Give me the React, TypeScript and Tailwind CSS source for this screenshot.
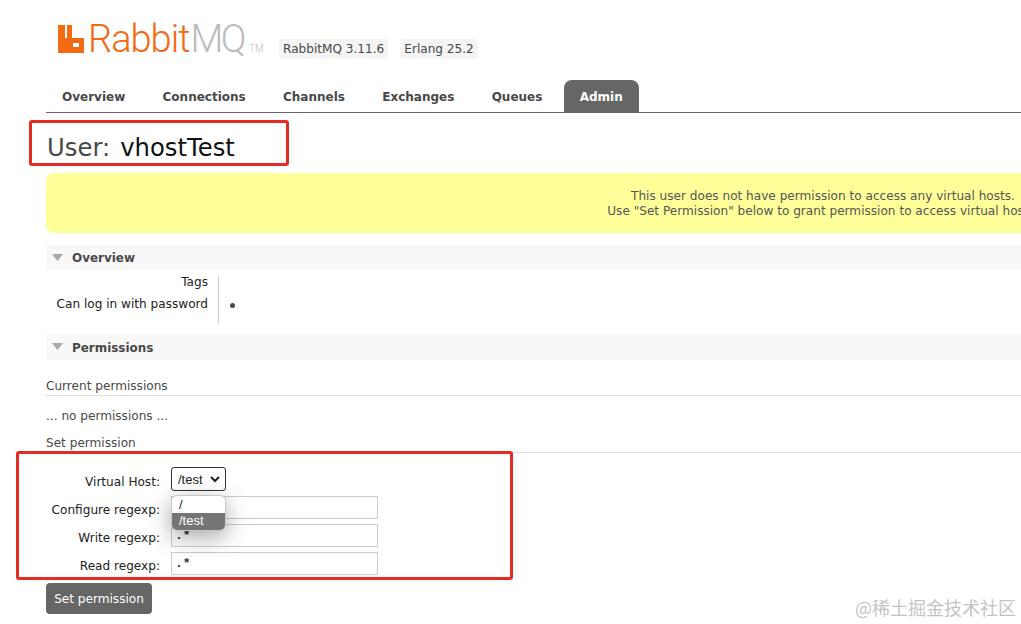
const SectionHeader = ({ title, className }: { title: string; className: string }) => (
  <div className={`relative flex items-center bg-[#f8f8f8] pl-[26px] pt-[3px] text-[11.95px] font-bold text-[#484848] ${className}`}>
    <svg className="absolute left-[6px] top-[9px]" width="11" height="7" viewBox="0 0 11 7">
      <path d="M0 0H11L5.5 7Z" fill="#a8a8a8" />
    </svg>
    {title}
  </div>
);

const Tab = ({ label, active }: { label: string; active?: boolean }) => (
  <div
    className={`flex h-[32px] items-center px-4 pt-[2px] text-[12px] font-bold ${
      active ? "rounded-t-[8px] bg-[#666666] text-white" : "text-[#484848]"
    }`}
  >
    {label}
  </div>
);

const FormRow = ({ label, value }: { label: string; value?: string }) => (
  <div className="flex h-[28px] items-start">
    <div className="w-[125px] whitespace-nowrap pr-[11px] text-right leading-[30px] text-[#222222]">{label}</div>
    <div className="mt-[1px] flex h-[23px] w-[207px] items-center border border-[#cccccc] bg-white pl-[3px] font-['Liberation_Mono',monospace] text-[13px] font-bold leading-none text-[#333333]">
      {value}
    </div>
  </div>
);

export default function App() {
  return (
    <div className="relative h-[624px] w-[1021px] overflow-hidden bg-white font-['DejaVu_Sans','Liberation_Sans',sans-serif] text-[12.1px] text-[#484848]">
      <div className="pl-[46px]">
        {/* Logo row */}
        <div className="flex h-[80px] items-start pl-[12px] pt-[18px]">
          <svg className="mt-[7px] shrink-0" width="26" height="28" viewBox="0 0 26 28">
            <path
              fill="#f26a13"
              fillRule="evenodd"
              d="M0 0H7V13H9V0H14V13H26V28H0ZM15 18V22H21V18Z"
            />
          </svg>
          <div className="ml-[4px] flex w-[175px] shrink-0 items-baseline font-['Roboto',sans-serif] text-[38px] font-light leading-[42px]">
            <span className="tracking-[-1px] text-[#f26a13]">Rabbit</span>
            <span className="ml-[1px] tracking-[-2.5px] text-[#bcbcbc]">MQ</span>
            <span className="ml-[5px] text-[10px] text-[#bcbcbc]">TM</span>
          </div>
          <div className="ml-[16px] mt-[21px] flex gap-[12px]">
            <span className="rounded-[3px] bg-[#f4f4f4] px-[4px] py-[1px]">RabbitMQ 3.11.6</span>
            <span className="rounded-[3px] bg-[#f4f4f4] px-[4px] py-[1px]">Erlang 25.2</span>
          </div>
        </div>
        {/* Tabs */}
        <div className="flex gap-[5.3px] border-b border-[#666666]">
          <Tab label="Overview" />
          <Tab label="Connections" />
          <Tab label="Channels" />
          <Tab label="Exchanges" />
          <Tab label="Queues" />
          <Tab label="Admin" active />
        </div>
        {/* Title */}
        <h1 className="ml-px mt-[20px] flex h-[30px] items-center text-[24.3px] leading-none text-[#484848]">
          User:<span className="ml-[10px] text-[#111111]">vhostTest</span>
        </h1>
        {/* Warning */}
        <div className="mt-[10px] flex h-[60px] w-[1554px] flex-col items-center justify-center rounded-l-[8px] bg-[#ffff99] pt-[2px] text-center leading-[15px] text-[#555555]">
          <div>This user does not have permission to access any virtual hosts.</div>
          <div>Use "Set Permission" below to grant permission to access virtual hosts.</div>
        </div>
        <SectionHeader title="Overview" className="mt-[12px] h-[25px]" />
        <div className="mt-[6px] flex h-[47px]">
          <div className="w-[173px] border-r border-[#cccccc] pr-[10px] text-right text-[#222222]">
            <div className="h-[22px] leading-[12px]">Tags</div>
            <div className="leading-[12px]">Can log in with password</div>
          </div>
          <div className="pl-[11px] pt-[27px]">
            <div className="h-[5px] w-[5px] rounded-full bg-[#484848]" />
          </div>
        </div>
        <SectionHeader title="Permissions" className="mt-[11px] h-[26px]" />
        <div className="mt-[19px] border-b border-[#dddddd] pb-[1px] leading-[15px]">Current permissions</div>
        <div className="mt-[13px] leading-[15px]">... no permissions ...</div>
        <div className="mt-[12px] border-b border-[#dddddd] pb-[1px] leading-[15px]">Set permission</div>
        <div className="mt-[14px]">
          <div className="flex h-[28px] items-start">
            <div className="w-[125px] whitespace-nowrap pr-[11px] text-right leading-[30px] text-[#222222]">Virtual Host:</div>
            <div className="flex h-[24px] w-[55px] items-center rounded-[3px] border border-[#333333] pl-[6px] pt-[1px] font-['Liberation_Sans',sans-serif] text-[13px] text-[#222222]">
              /test
              <svg className="ml-[7px]" width="10" height="7" viewBox="0 0 10 7">
                <path d="M1 1L5 5L9 1" fill="none" stroke="#222222" strokeWidth="2" />
              </svg>
            </div>
          </div>
          <FormRow label="Configure regexp:" />
          <FormRow label="Write regexp:" value=".*" />
          <FormRow label="Read regexp:" value=".*" />
        </div>
        <div className="mt-[4px] flex h-[31px] w-[106px] items-center justify-center rounded-[4px] bg-[#666666] pt-[2px] text-white">
          Set permission
        </div>
      </div>

      {/* Open select menu */}
      <div className="absolute left-[171px] top-[495px] w-[55px] overflow-hidden rounded-[6px] border border-[#c8c8c8] bg-white font-['Liberation_Sans',sans-serif] text-[13px] leading-[17px] text-[#222222] shadow-[0_6px_22px_rgba(0,0,0,0.35)]">
        <div className="pl-[7px]">/</div>
        <div className="bg-[#757575] pb-[1px] pl-[7px] leading-[16px] text-white">/test</div>
      </div>

      {/* Annotation boxes */}
      <div className="absolute left-[29px] top-[120px] h-[46px] w-[260px] rounded-[3px] border-[3px] border-[#e52b24]" />
      <div className="absolute left-[16px] top-[451px] h-[129px] w-[497px] rounded-[3px] border-[3px] border-[#e52b24]" />

      {/* Watermark */}
      <div className="absolute left-[855px] top-[596px] font-['Noto_Sans_CJK_SC',sans-serif] text-[18px] leading-[22px] text-[#c4c4c4]">
        @稀土掘金技术社区
      </div>
    </div>
  );
}
